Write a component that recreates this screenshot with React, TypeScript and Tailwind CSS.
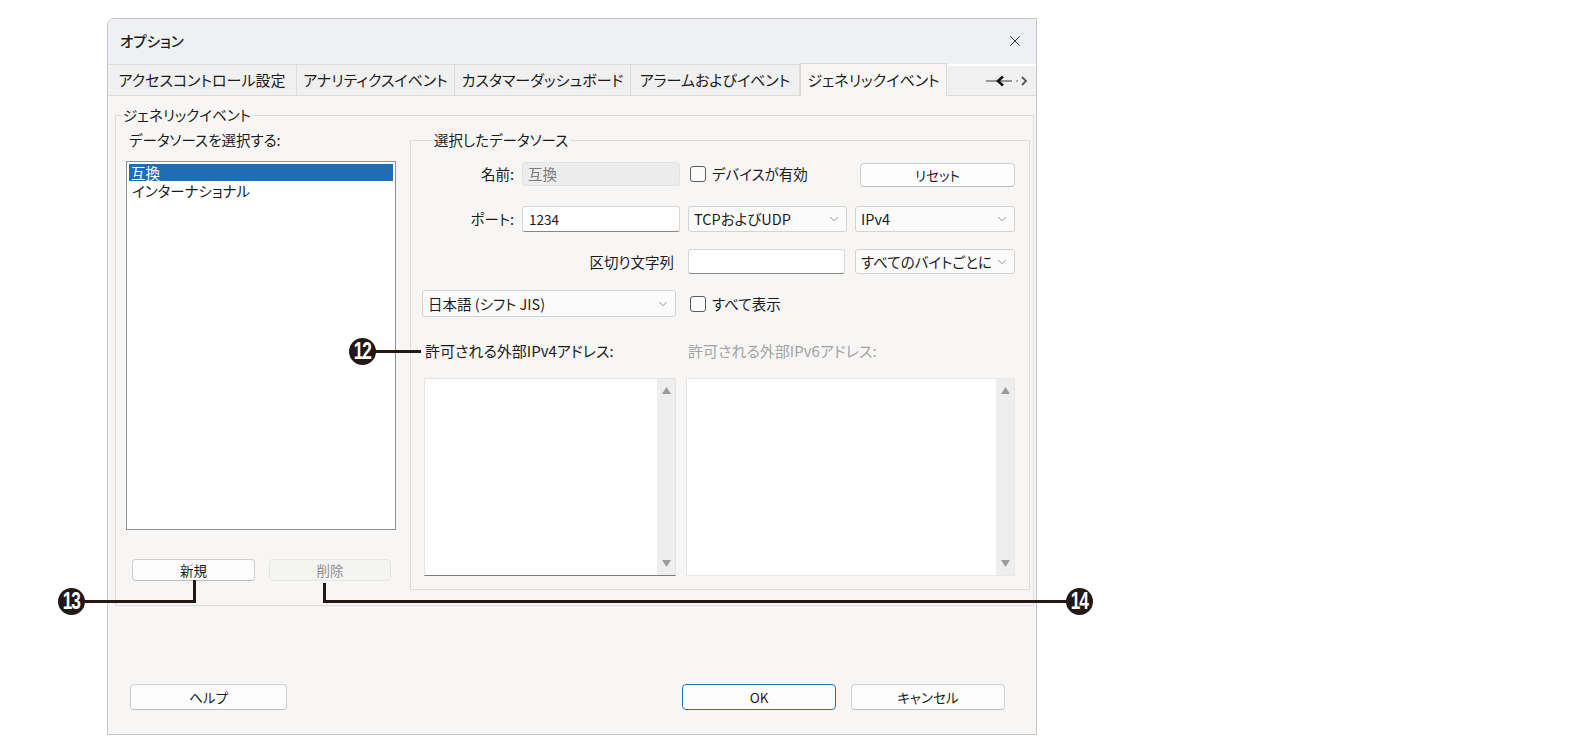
import React from 'react';
import { X, ChevronDown } from 'lucide-react';

const tabs = [
    { label: 'アクセスコントロール設定', w: 'w-[189px]' },
    { label: 'アナリティクスイベント', w: 'w-[158px]' },
    { label: 'カスタマーダッシュボード', w: 'w-[176px]' },
    { label: 'アラームおよびイベント', w: 'w-[169px]' },
];

function Checkbox({ label }: { label: string }) {
    return (
        <div className="flex items-center gap-[6px] pl-[2px] h-full">
            <div className="w-[16px] h-[16px] rounded-[3px] border border-[#5c5c5c] bg-[#fbfbfb]" />
            <span className="text-[14.5px]">{label}</span>
        </div>
    );
}

function Select({ value, className = '' }: { value: string; className?: string }) {
    return (
        <div className={`flex items-center h-full pl-[5px] pr-[5px] bg-[#fbfbfb] border border-[#d3d3d3] rounded-[3px] ${className}`}>
            <span className="flex-1 text-[14.5px] whitespace-nowrap overflow-hidden">{value}</span>
            <ChevronDown className="w-[14px] h-[14px] shrink-0 text-[#6b6b6b]" strokeWidth={1.2} />
        </div>
    );
}

function Button({ label, className = '', disabled = false }: { label: string; className?: string; disabled?: boolean }) {
    return (
        <button
            type="button"
            className={`h-full rounded-[4px] border text-[13.5px] ${disabled ? 'bg-[#f4f4f3] border-[#e6e6e6] text-[#8e8e8e]' : 'bg-[#fdfdfd] border-[#d0d0d0] border-b-[#bdbdbd]'} ${className}`}
        >
            {label}
        </button>
    );
}

function ScrollList({ className = '' }: { className?: string }) {
    return (
        <div className={`flex h-[198px] bg-white border ${className}`}>
            <div className="flex-1" />
            <div className="w-[18px] bg-[#eeeeee] flex flex-col items-center justify-between py-[8px]">
                <svg width="9" height="7" viewBox="0 0 9 7"><polygon points="4.5,0 9,7 0,7" fill="#9b9b9b" /></svg>
                <svg width="9" height="7" viewBox="0 0 9 7"><polygon points="0,0 9,0 4.5,7" fill="#9b9b9b" /></svg>
            </div>
        </div>
    );
}

function Callout({ n, className }: { n: string; className: string }) {
    return (
        <div className={`absolute w-[27px] h-[27px] rounded-full bg-[#231815] flex items-center justify-center ${className}`}>
            <span className="text-white font-['Liberation_Sans',sans-serif] font-bold text-[23px] leading-none tracking-[-1.5px] scale-x-75">{n}</span>
        </div>
    );
}

export default function App() {
    return (
        <div className="relative w-[1594px] h-[753px] overflow-hidden bg-white pt-[18px] pl-[107px] font-['Noto_Sans_CJK_JP','Noto_Sans',sans-serif] [font-feature-settings:'palt'] text-[#1b1b1b]">
            <div className="w-[930px] h-[717px] flex flex-col bg-[#f7f6f5] border border-[#c6c6c6] rounded-tl-[7px] overflow-hidden">

                {/* title bar */}
                <div className="h-[44px] shrink-0 flex items-center justify-between pl-[12px] pr-[12px] bg-[#eef0f3]">
                    <span className="text-[14.5px] font-medium">オプション</span>
                    <X className="w-[18px] h-[18px] text-[#333]" strokeWidth={1.3} />
                </div>

                {/* tabs */}
                <div className="h-[33px] shrink-0 flex items-end bg-[#eef0f3] border-b border-[#dadada]">
                    {tabs.map((t) => (
                        <div key={t.label} className={`${t.w} h-[31px] flex items-center justify-center bg-[#f0f0f0] border-t border-r border-[#dcdcdc] text-[15px] whitespace-nowrap`}>
                            {t.label}
                        </div>
                    ))}
                    <div className="w-[147px] h-[33px] -mb-px flex items-center justify-center bg-[#f7f6f5] border-x border-t border-[#d8d8d8] text-[15px] whitespace-nowrap">
                        ジェネリックイベント
                    </div>
                    <div className="flex-1 h-[31px] flex items-center justify-end pr-[6px] bg-[#f0f0f0] border-t-2 border-white">
                        <svg width="44" height="12" viewBox="0 0 44 12">
                            <line x1="0" y1="6" x2="26" y2="6" stroke="#777" strokeWidth="1.6" />
                            <polyline points="17,1.5 12,6 17,10.5" fill="none" stroke="#111" strokeWidth="2.6" />
                            <circle cx="31" cy="6" r="0.9" fill="#888" />
                            <polyline points="36,2 40,6 36,10" fill="none" stroke="#555" strokeWidth="1.8" />
                        </svg>
                    </div>
                </div>

                {/* panel */}
                <div className="flex-1 flex flex-col pl-[7px] pr-[2px]">
                    <fieldset className="mt-[9px] border border-[#dcdcdc]">
                        <legend className="ml-[5px] px-[2px] text-[14.5px] leading-[20px]">ジェネリックイベント</legend>
                        <div className="flex items-start gap-[14px] pl-[10px] pt-[5px] pb-[15px]">

                            {/* data source list */}
                            <div className="w-[270px] flex flex-col">
                                <div className="h-[20px] leading-[20px] pl-[3px] text-[14.5px]">データソースを選択する:</div>
                                <div className="mt-[11px] h-[369px] bg-white border border-[#8c8f94] p-[2px]">
                                    <div className="h-[17px] leading-[17px] pl-[2px] bg-[#1f6db5] text-white text-[14.5px]">互換</div>
                                    <div className="h-[19px] leading-[19px] pl-[3px] text-[14.5px]">インターナショナル</div>
                                </div>
                                <div className="mt-[29px] h-[22px] flex gap-[14px] pl-[6px]">
                                    <Button label="新規" className="w-[123px]" />
                                    <Button label="削除" className="w-[122px]" disabled />
                                </div>
                            </div>

                            {/* selected data source */}
                            <fieldset className="w-[620px] border border-[#dcdcdc] pl-[11px] pr-[14px] pb-[13px]">
                                <legend className="ml-[10px] px-[2px] text-[14.5px] leading-[20px]">選択したデータソース</legend>

                                <div className="mt-[12px] h-[24px] grid grid-cols-[92px_158px_159px_160px] gap-x-[8px]">
                                    <div className="flex items-center justify-end text-[14.5px]">名前:</div>
                                    <div className="flex items-center pl-[5px] bg-[#ececec] border border-[#e3e3e3] rounded-[3px] text-[14.5px] text-[#7b7b7b]">互換</div>
                                    <Checkbox label="デバイスが有効" />
                                    <div className="pl-[5px]">
                                        <Button label="リセット" className="w-full text-[12px]" />
                                    </div>
                                </div>

                                <div className="mt-[20px] h-[26px] grid grid-cols-[92px_158px_159px_160px] gap-x-[8px]">
                                    <div className="flex items-center justify-end text-[14.5px]">ポート:</div>
                                    <div className="flex items-center pl-[6px] bg-white border border-[#d8d8d8] border-b-[#868686] rounded-[3px] text-[13.5px]">1234</div>
                                    <Select value="TCPおよびUDP" />
                                    <Select value="IPv4" />
                                </div>

                                <div className="mt-[17px] h-[25px] grid grid-cols-[92px_158px_159px_160px] gap-x-[8px]">
                                    <div className="col-span-2 flex items-center justify-end pr-[6px] text-[14.5px]">区切り文字列</div>
                                    <div className="mr-[2px] bg-white border border-[#d8d8d8] border-b-[#868686] rounded-[3px]" />
                                    <Select value="すべてのバイトごとに" />
                                </div>

                                <div className="mt-[16px] h-[27px] grid grid-cols-[92px_158px_159px_160px] gap-x-[8px]">
                                    <Select value="日本語 (シフト JIS)" className="col-span-2 mr-[4px]" />
                                    <Checkbox label="すべて表示" />
                                </div>

                                <div className="mt-[24px] grid grid-cols-[252px_329px] gap-x-[10px] ml-[2px]">
                                    <div className="h-[20px] leading-[20px] pl-px text-[15px]">許可される外部IPv4アドレス:</div>
                                    <div className="h-[20px] leading-[20px] pl-[2px] text-[15px] text-[#a3a3a3]">許可される外部IPv6アドレス:</div>
                                    <ScrollList className="mt-[17px] border-[#e4e4e4] border-b-[#7b7b7b]" />
                                    <ScrollList className="mt-[17px] border-[#e8e8e8]" />
                                </div>
                            </fieldset>
                        </div>
                    </fieldset>

                    {/* dialog buttons */}
                    <div className="mt-auto mb-[24px] h-[26px] flex items-center justify-between pl-[15px] pr-[29px]">
                        <Button label="ヘルプ" className="w-[157px]" />
                        <div className="h-full flex gap-[15px]">
                            <Button label="OK" className="w-[154px] !border-[#2f6fb6]" />
                            <Button label="キャンセル" className="w-[154px]" />
                        </div>
                    </div>
                </div>
            </div>

            {/* annotations */}
            <Callout n="12" className="left-[349px] top-[338px]" />
            <div className="absolute left-[375px] top-[350px] w-[46px] h-[3px] bg-[#231815]" />

            <Callout n="13" className="left-[58px] top-[588px]" />
            <div className="absolute left-[84px] top-[600px] w-[112px] h-[3px] bg-[#231815]" />
            <div className="absolute left-[193px] top-[580px] w-[3px] h-[23px] bg-[#231815]" />

            <Callout n="14" className="left-[1066px] top-[588px]" />
            <div className="absolute left-[323px] top-[600px] w-[744px] h-[3px] bg-[#231815]" />
            <div className="absolute left-[323px] top-[583px] w-[3px] h-[20px] bg-[#231815]" />
        </div>
    );
}
